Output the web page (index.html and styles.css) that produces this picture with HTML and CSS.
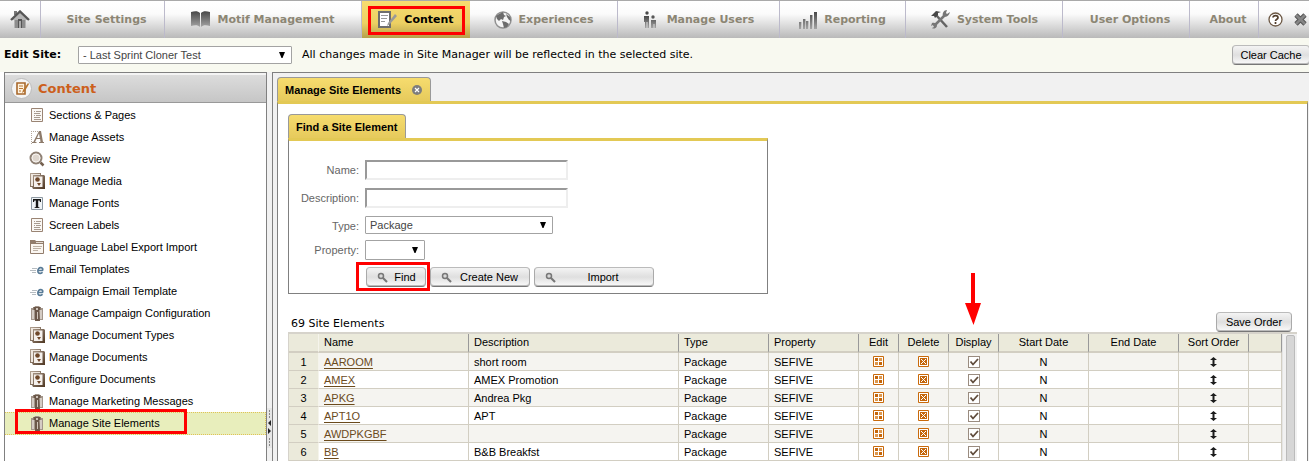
FILE: index.html
```html
<!DOCTYPE html>
<html lang="en">
<head>
<meta charset="utf-8">
<title>Manage Site Elements</title>
<link rel="stylesheet" href="styles.css">
</head>
<body>
<svg class="sprite" aria-hidden="true">
  <defs>
    <linearGradient id="steel" x1="0" y1="0" x2="0" y2="1"><stop offset="0" stop-color="#484848"/><stop offset="1" stop-color="#a4a4a4"/></linearGradient>
    <linearGradient id="bronze" x1="0" y1="0" x2="1" y2="1"><stop offset="0" stop-color="#b5a596"/><stop offset="1" stop-color="#4e3622"/></linearGradient>
  </defs>
  <symbol id="i-page" viewBox="0 0 16 16"><path d="M2.500 1.500h11v13h-11z" fill="#fbf8f4" stroke="#9a8474"/><path d="M5 4.500h1M7 4.500h5M5 6.500h6M5 8.500h1M7 8.500h5M5 10.500h6M5 12.500h7" stroke="#a89a8e"/></symbol>
  <symbol id="i-asset" viewBox="0 0 16 16"><path d="M2.500 2v13M2 2.500h8" stroke="#b4a89c" stroke-dasharray="1 1"/><path d="M10 2h2l2 11h1v1h-5v-1h1.500l-.4-3H7.500L6 13h1.500v1H3v-1h1.300zM10 4.500 8 9h2.800z" fill="#8d7b6b" fill-rule="evenodd"/></symbol>
  <symbol id="i-preview" viewBox="0 0 16 16"><circle cx="7" cy="7" r="5.500" fill="#ded6ce" stroke="#8f8175" stroke-width="2"/><circle cx="7" cy="7" r="4" fill="none" stroke="#f7f3ef"/><path d="m11.500 11.500 3 3" stroke="#75614f" stroke-width="2.500"/></symbol>
  <symbol id="i-media" viewBox="0 0 16 16"><path d="M1 0h11v2h3l1 1v13H4l-1-2H1z" fill="url(#bronze)"/><path d="M2 1h9v1H4v11H2z" fill="#efe7df"/><path d="M5 3.500h8.500V14H5z" fill="#f5f0ec"/><circle cx="8.500" cy="6.500" r="2.300" fill="#6f482a"/><path d="M8 10h4l-2 3z" fill="#6f482a"/></symbol>
  <symbol id="i-font" viewBox="0 0 16 16"><path d="M2.500 2.500h11v12h-11z" fill="#eff3f6" stroke="#8d98a1"/><path d="M4 4h8v3h-1l-.500-1.500H9.200v6.500l1.300.5v.5h-5v-.5l1.300-.5V5.500H5.500L5 7H4z" fill="#171717"/></symbol>
  <symbol id="i-label" viewBox="0 0 16 16"><path d="M1.500 2.500h13v12h-13z" fill="#faf6f1" stroke="#927d6d"/><path d="M1 1h5l1 1h8v3H1z" fill="#927d6d"/><path d="M7 3h7v1H7z" fill="#e6ddd4"/><path d="M4 7.500h9M4 9.500h8M4 11.500h5" stroke="#bdb1a5"/></symbol>
  <symbol id="i-email" viewBox="0 0 16 16"><path d="M3 7.500h5M1 9.500h6M3 11.500h4" stroke="#b6bcc1"/><path d="M9 9.500h4.500C14.500 7 11.500 5.500 9.700 7.500 7.800 10 9 12.700 11.500 12.300c1 0 1.700-.6 2-1" fill="none" stroke="#587b97" stroke-width="1.700"/></symbol>
  <symbol id="i-config" viewBox="0 0 16 16"><path d="M2 3h3l1-2h4l2 2h2v12H2z" fill="#a3968b"/><path d="M3 5h2v9H3zM11 5h2v9h-2z" fill="#d5ccc4"/><path d="M5 2h6v3h-1l1 11H6V5H5z" fill="#6b5749"/><path d="M4 2h1v3H4zM11 2h1v3h-1z" fill="#8c7b6e"/><path d="M7 3h2v2H7zM8 7h1v7H8z" fill="#cfc4ba"/></symbol>
  <symbol id="i-search" viewBox="0 0 12 12"><circle cx="4" cy="4" r="2.500" fill="#d8d8d8" stroke="#777" stroke-width="1.500"/><path d="m6 6 4 4" stroke="#777" stroke-width="2.200"/></symbol>
  <symbol id="i-edit" viewBox="0 0 11 11"><path d="M.5.5h10v10H.5z" fill="#fff" stroke="#c96a0b"/><path d="M2 2h3v3H2zM6 6h3v3H6z" fill="#c5660a"/><path d="M6 2h3v3H6zM2 6h3v3H2z" fill="#dd984f"/></symbol>
  <symbol id="i-delete" viewBox="0 0 11 11"><path d="M.5.5h10v10H.5z" fill="#fff" stroke="#c96a0b"/><path d="M2 2h7v7H2z" fill="#c5660a"/><path d="m3 3 5 5M8 3 3 8" stroke="#fff"/></symbol>
  <symbol id="i-sort" viewBox="0 0 7 10"><path d="M3.500 0 7 3H4.500v4H7L3.500 10 0 7h2.500V3H0z" fill="#1c1c1c"/></symbol>
</svg>

<nav class="nav">
  <a class="nav-item home" href="#" aria-label="Home"><svg width="20" height="20" viewBox="0 0 20 20"><path d="M4 1h3v4H4z" fill="#777"/><path d="M10 1 18 9v1h-2v8H4v-8H2V9z" fill="#b4b4b4"/><path d="m1 10 9-8.500 9 8.500" fill="none" stroke="#555" stroke-width="2.400"/><path d="M5 10h3v8H5zM12 10h3v8h-3z" fill="#8d8d8d"/><path d="M8 9h4v9H8z" fill="#555"/><path d="M9 11h2v7H9z" fill="#aaa"/></svg></a>
  <a class="nav-item plain" href="#">Site Settings</a>
  <a class="nav-item" href="#"><svg width="19" height="17" viewBox="0 0 19 17"><path d="M0 1c4-1 7-1 9 1v14c-2-2-5-2-9-1zM10 2c2-2 5-2 9-1v14c-4-1-7-1-9 1z" fill="url(#steel)"/></svg>Motif Management</a>
  <a class="nav-item active" href="#"><svg width="19" height="18" viewBox="0 0 19 18"><path d="M1 1h11v15H1z" fill="#fff" stroke="#6e6e6e" stroke-width="2"/><path d="M3 4.500h7M3 7.500h6M3 10.500h4" stroke="#999"/><path d="m17 3-7 9-1 3 3-2 7-8z" fill="#999"/></svg>Content</a>
  <a class="nav-item" href="#"><svg width="18" height="18" viewBox="0 0 18 18"><circle cx="9" cy="9" r="8" fill="#f4f4f4" stroke="#909090" stroke-width="1.500"/><path d="M5 3l4-2 1 3 2 1-2 1-1 3-2-1-2 2-2-2-1-3zM12 3l4 3 1 4-2-1-2-3zM8 10l4 1 3 2-2 3-3 1-1-4z" fill="#6c6c6c"/></svg>Experiences</a>
  <a class="nav-item people" href="#"><svg width="14" height="18" viewBox="0 0 14 18"><circle cx="4" cy="2" r="1.700" fill="#484848"/><circle cx="10" cy="6" r="1.700" fill="#585858"/><path d="M1 5h5v12H4.500v-6h-1v6H2v-6H1zM8 9h5v8h-1.500v-4h-1v4H8z" fill="url(#steel)"/></svg>Manage Users</a>
  <a class="nav-item" href="#"><svg width="18" height="18" viewBox="0 0 18 18"><path d="M0 11h3v7H0zM4 8h3v10H4zM7 10h3v8H7zM11 4h3v14h-3zM15 1h3v17h-3z" fill="url(#steel)"/><path d="M2.500 11v7M6.500 8v10M9.500 10v8M13.500 4v14" stroke="#fff" opacity=".5"/></svg>Reporting</a>
  <a class="nav-item" href="#"><svg width="20" height="19" viewBox="0 0 20 19"><path d="m6 5 11 12" stroke="#646464" stroke-width="2.500"/><path d="M1 6 6 1l5 1-3 1v2L5 8 4 6z" fill="#484848"/><path d="M4 16 15 5" stroke="#777" stroke-width="2.500"/><path d="M17 0c-3 0-5 3-4 6 3 2 6 0 7-4l-3 2-1-1zM2 13c2-1 5 0 5 3-1 3-4 3-5 2l2-1-1-2-2 1z" fill="#777"/></svg>System Tools</a>
  <a class="nav-item plain" href="#">User Options</a>
  <a class="nav-item plain" href="#">About</a>
  <div class="nav-tools">
    <button type="button" class="tool" aria-label="Help"><svg width="15" height="15" viewBox="0 0 15 15"><circle cx="7.500" cy="7.500" r="6.500" fill="#fff" stroke="#6c5844" stroke-width="1.300"/><path d="M5 5.500c.3-2.500 5-2.500 5 .2 0 1.500-2.500 1.500-2.500 3.300M7.500 10v2" fill="none" stroke="#513d2b" stroke-width="1.700"/></svg></button>
    <button type="button" class="tool" aria-label="Close"><svg width="13" height="13" viewBox="0 0 13 13"><path d="m2 2 9 9M11 2l-9 9" stroke="#555" stroke-width="4.600"/><path d="m2 2 9 9M11 2l-9 9" stroke="#858585" stroke-width="2.600"/></svg></button>
  </div>
</nav>

<div class="sitebar">
  <label class="sitebar-label" for="site">Edit Site:</label>
  <select class="select site-select" id="site"><option>- Last Sprint Cloner Test</option></select>
  <span class="sitebar-note">All changes made in Site Manager will be reflected in the selected site.</span>
  <button type="button" class="btn clear-btn">Clear Cache</button>
</div>

<div class="workspace">
  <aside class="side">
    <h2 class="side-title"><svg width="21" height="21" viewBox="0 0 21 21"><circle cx="10.500" cy="10.500" r="10" fill="#f5f5f5" stroke="#bbb"/><path d="M6 5h8v11H6z" fill="#fff3e0" stroke="#a8682c" stroke-width="1.600"/><path d="M8 8h4M8 10.500h4M8 13h2" stroke="#b87836"/><path d="m17 5-5 7-1 3 3-2 4-7z" fill="#b8752f"/></svg>Content</h2>
    <ul class="menu">
      <li><a href="#"><svg class="ico"><use href="#i-page"/></svg>Sections &amp; Pages</a></li>
      <li><a href="#"><svg class="ico"><use href="#i-asset"/></svg>Manage Assets</a></li>
      <li><a href="#"><svg class="ico"><use href="#i-preview"/></svg>Site Preview</a></li>
      <li><a href="#"><svg class="ico"><use href="#i-media"/></svg>Manage Media</a></li>
      <li><a href="#"><svg class="ico"><use href="#i-font"/></svg>Manage Fonts</a></li>
      <li><a href="#"><svg class="ico"><use href="#i-page"/></svg>Screen Labels</a></li>
      <li><a href="#"><svg class="ico"><use href="#i-label"/></svg>Language Label Export Import</a></li>
      <li><a href="#"><svg class="ico"><use href="#i-email"/></svg>Email Templates</a></li>
      <li><a href="#"><svg class="ico"><use href="#i-email"/></svg>Campaign Email Template</a></li>
      <li><a href="#"><svg class="ico"><use href="#i-config"/></svg>Manage Campaign Configuration</a></li>
      <li><a href="#"><svg class="ico"><use href="#i-media"/></svg>Manage Document Types</a></li>
      <li><a href="#"><svg class="ico"><use href="#i-media"/></svg>Manage Documents</a></li>
      <li><a href="#"><svg class="ico"><use href="#i-media"/></svg>Configure Documents</a></li>
      <li><a href="#"><svg class="ico"><use href="#i-config"/></svg>Manage Marketing Messages</a></li>
      <li class="selected"><a href="#"><svg class="ico"><use href="#i-config"/></svg>Manage Site Elements</a></li>
    </ul>
  </aside>

  <div class="splitter"><svg width="5" height="40" viewBox="0 0 5 40"><path d="M0 0h5v40H0z" fill="#e6e6e6"/><path d="M2.500 2v8M2.500 30v8" stroke="#888" stroke-dasharray="2 1"/><path d="M4 12v6L1 15zM1 20v6l3-3z" fill="#222"/></svg></div>

  <main class="main">
    <div class="tab page-tab">Manage Site Elements <button type="button" class="tab-close" aria-label="Close tab"><svg width="10" height="10" viewBox="0 0 10 10"><circle cx="5" cy="5" r="5" fill="#7d7d7d"/><path d="m3 3 4 4M7 3 3 7" stroke="#fff" stroke-width="1.200"/></svg></button></div>
    <section class="page">
      <div class="tab find-tab">Find a Site Element</div>
      <form class="find">
        <label for="name">Name:</label><input class="text" id="name" type="text">
        <label for="desc">Description:</label><input class="text" id="desc" type="text">
        <label for="type">Type:</label><select class="select type-select" id="type"><option>Package</option></select>
        <label for="prop">Property:</label><select class="select prop-select" id="prop"><option></option></select>
        <div class="actions">
          <span class="marked"><button type="button" class="btn find-btn"><svg class="mag"><use href="#i-search"/></svg><span>Find</span></button></span>
          <button type="button" class="btn create-btn"><svg class="mag"><use href="#i-search"/></svg><span>Create New</span></button>
          <button type="button" class="btn import-btn"><svg class="mag"><use href="#i-search"/></svg><span>Import</span></button>
        </div>
      </form>

      <div class="list-head"><span>69 Site Elements</span><button type="button" class="btn save-btn">Save Order</button></div>
      <div class="list">
        <table class="grid">
          <colgroup><col class="c-num"><col class="c-name"><col class="c-desc"><col class="c-wide"><col class="c-wide"><col class="c-edit"><col class="c-act"><col class="c-act"><col class="c-wide"><col class="c-wide"><col class="c-sort"><col class="c-end"></colgroup>
          <thead><tr><th></th><th>Name</th><th>Description</th><th>Type</th><th>Property</th><th class="mid">Edit</th><th class="mid">Delete</th><th class="mid">Display<svg class="pointer" width="16" height="52" viewBox="0 0 16 52"><path d="M6 0h4v30h6L8.500 52 0 30h6z" fill="#f00"/></svg></th><th class="mid">Start Date</th><th class="mid">End Date</th><th class="mid">Sort Order</th><th></th></tr></thead>
          <tbody>
            <tr><th>1</th><td><a href="#">AAROOM</a></td><td>short room</td><td>Package</td><td>SEFIVE</td><td class="mid"><svg class="act"><use href="#i-edit"/></svg></td><td class="mid"><svg class="act"><use href="#i-delete"/></svg></td><td class="mid"><input type="checkbox" aria-label="Display AAROOM" checked></td><td class="mid">N</td><td></td><td class="mid"><svg class="sort"><use href="#i-sort"/></svg></td><td></td></tr>
            <tr><th>2</th><td><a href="#">AMEX</a></td><td>AMEX Promotion</td><td>Package</td><td>SEFIVE</td><td class="mid"><svg class="act"><use href="#i-edit"/></svg></td><td class="mid"><svg class="act"><use href="#i-delete"/></svg></td><td class="mid"><input type="checkbox" aria-label="Display AMEX" checked></td><td class="mid">N</td><td></td><td class="mid"><svg class="sort"><use href="#i-sort"/></svg></td><td></td></tr>
            <tr><th>3</th><td><a href="#">APKG</a></td><td>Andrea Pkg</td><td>Package</td><td>SEFIVE</td><td class="mid"><svg class="act"><use href="#i-edit"/></svg></td><td class="mid"><svg class="act"><use href="#i-delete"/></svg></td><td class="mid"><input type="checkbox" aria-label="Display APKG" checked></td><td class="mid">N</td><td></td><td class="mid"><svg class="sort"><use href="#i-sort"/></svg></td><td></td></tr>
            <tr><th>4</th><td><a href="#">APT1O</a></td><td>APT</td><td>Package</td><td>SEFIVE</td><td class="mid"><svg class="act"><use href="#i-edit"/></svg></td><td class="mid"><svg class="act"><use href="#i-delete"/></svg></td><td class="mid"><input type="checkbox" aria-label="Display APT1O" checked></td><td class="mid">N</td><td></td><td class="mid"><svg class="sort"><use href="#i-sort"/></svg></td><td></td></tr>
            <tr><th>5</th><td><a href="#">AWDPKGBF</a></td><td></td><td>Package</td><td>SEFIVE</td><td class="mid"><svg class="act"><use href="#i-edit"/></svg></td><td class="mid"><svg class="act"><use href="#i-delete"/></svg></td><td class="mid"><input type="checkbox" aria-label="Display AWDPKGBF" checked></td><td class="mid">N</td><td></td><td class="mid"><svg class="sort"><use href="#i-sort"/></svg></td><td></td></tr>
            <tr><th>6</th><td><a href="#">BB</a></td><td>B&amp;B Breakfst</td><td>Package</td><td>SEFIVE</td><td class="mid"><svg class="act"><use href="#i-edit"/></svg></td><td class="mid"><svg class="act"><use href="#i-delete"/></svg></td><td class="mid"><input type="checkbox" aria-label="Display BB" checked></td><td class="mid">N</td><td></td><td class="mid"><svg class="sort"><use href="#i-sort"/></svg></td><td></td></tr>
          </tbody>
        </table>
        <div class="scroll"><div class="thumb"></div></div>
      </div>
    </section>
  </main>
</div>
</body>
</html>
```

FILE: styles.css
```css
* { box-sizing: border-box; }
body {
  margin: 0;
  height: 100vh;
  display: flex;
  flex-direction: column;
  overflow: hidden;
  background: #fff;
  color: #000;
  font: 11px/14px "Liberation Sans", Arial, sans-serif;
}
a { color: inherit; text-decoration: none; }
button, input, select { font: inherit; color: inherit; margin: 0; }
svg { display: block; flex: none; }
.sprite { position: absolute; width: 0; height: 0; }

/* top navigation */
.nav {
  display: grid;
  grid-template-columns: 41fr 124fr 197fr 108fr 148fr 162fr 126fr 157fr 127fr 69fr 50fr;
  height: 38px;
  flex: none;
  border-top: 1px solid #a9a9a9;
  background: linear-gradient(#fff 0%, #fbfbfb 35%, #b9b9b9 100%);
}
.nav-item {
  display: flex;
  align-items: center;
  justify-content: center;
  gap: 7px;
  border-right: 1px solid #bcbacb;
  color: #8c8674;
  font: bold 11px/14px Verdana, "DejaVu Sans", sans-serif;
  white-space: nowrap;
}
.nav-item.plain { padding-left: 8px; }
.nav-item.people { gap: 10px; }
.nav-item.active {
  position: relative;
  border-right: 0;
  background: linear-gradient(#f7dc70 0%, #ecd063 60%, #b5a04b 100%);
  color: #000;
}
.nav-item.active::after {
  content: "";
  position: absolute;
  inset: 5px 5px 3px 6px;
  border: 3px solid #f00;
}
.nav-tools { display: flex; align-items: center; justify-content: space-between; padding: 0 2px 0 9px; }
.tool, .tab-close { padding: 0; border: 0; background: none; }

/* site selection bar */
.sitebar {
  display: flex;
  align-items: center;
  flex: none;
  height: 34px;
  padding-left: 4px;
  background: #f8f9f0;
  font: 11px/14px Verdana, "DejaVu Sans", sans-serif;
}
.sitebar-label { width: 74px; font-weight: bold; }
.sitebar-note { flex: 1; padding-left: 10px; white-space: nowrap; }
.select {
  appearance: none;
  height: 18px;
  padding: 0 20px 0 4px;
  border: 1px solid #a3a3a3;
  border-radius: 1px;
  color: #444;
  font: 11px/16px "Liberation Sans", Arial, sans-serif;
  background: #fff url("data:image/svg+xml,%3Csvg xmlns='http://www.w3.org/2000/svg' width='6' height='6'%3E%3Cpath d='M0 0h6L3.500 6h-1z'/%3E%3C/svg%3E") no-repeat right 6px center;
}
.site-select { width: 214px; }
.btn {
  display: flex;
  align-items: center;
  justify-content: center;
  height: 20px;
  padding: 0 8px;
  border: 1px solid #999;
  border-color: #bbb #aaa #777;
  border-radius: 4px;
  background: linear-gradient(#f4f4f4, #dfdfdf 50%, #fafafa);
  box-shadow: inset 0 -1px #bbb;
  color: #000;
  font: 11px/14px "Liberation Sans", Arial, sans-serif;
  white-space: nowrap;
}
.clear-btn { width: 78px; margin-right: -1px; }

/* panels */
.workspace { display: flex; flex: 1; min-height: 0; padding-left: 4px; }
.side { flex: none; width: 263px; border: 1px solid #808080; border-bottom: 0; background: #fff; overflow: hidden; }
.side-title {
  display: flex;
  align-items: center;
  gap: 6px;
  height: 30px;
  margin: 0;
  padding-left: 6px;
  border-top: 2px solid #f4f4f4;
  border-bottom: 1px solid #999;
  background: linear-gradient(#dcdcdc, #c6c6c6);
  color: #cc5f1c;
  font: bold 13px/16px Verdana, "DejaVu Sans", sans-serif;
}
.menu { list-style: none; margin: 0; padding: 1px 0 0; }
.menu a { display: flex; align-items: center; gap: 4px; height: 22px; padding-left: 24px; }
.ico { width: 16px; height: 16px; }
.menu .selected { position: relative; height: 23px; background: #e8eebc; border: 1px dotted #dfc356; border-width: 1px 1px 1px 0; }
.menu .selected a { height: 20px; }
.menu .selected::after {
  content: "";
  position: absolute;
  inset: -4px 78px 0 10px;
  border: 3px solid #f00;
}
.splitter { flex: none; width: 5px; padding-top: 336px; background: #f1f1f1; }
.main {
  display: flex;
  flex-direction: column;
  flex: 1;
  min-width: 0;
  padding: 4px 1px 0 4px;
  border-top: 1px solid #808080;
  border-left: 1px solid #808080;
  background: #f1f1f1;
}
.tab {
  display: flex;
  align-items: center;
  width: fit-content;
  height: 24px;
  padding: 0 8px 0 7px;
  border: 1px solid #999;
  border-bottom: 0;
  border-radius: 4px 4px 0 0;
  background: linear-gradient(#f6dc6e, #e6ca5c);
  font: bold 11px/14px "Liberation Sans", Arial, sans-serif;
  white-space: nowrap;
}
.tab-close { margin-left: 11px; }
.page {
  flex: 1;
  min-height: 0;
  overflow: hidden;
  padding: 10px 10px 0;
  border: 1px solid #808080;
  border-top: 3px solid #e3c955;
  border-bottom: 0;
  background: #fff;
}

/* search form */
.find {
  display: grid;
  grid-template-columns: 70px 1fr;
  grid-template-rows: 28px 28px 24px 27px 26px;
  column-gap: 6px;
  align-items: start;
  width: 480px;
  padding-top: 19px;
  border: 1px solid #808080;
  border-top: 3px solid #e3c955;
  color: #666;
}
.find label { padding-top: 3px; text-align: right; }
.text { width: 203px; height: 20px; padding: 0 2px; border: 2px solid; border-color: #999 #eee #eee #999; background: #fff; }
.type-select { width: 188px; }
.prop-select { width: 60px; height: 20px; }
.actions { grid-column: 2; display: flex; gap: 4px; padding-left: 1px; }
.marked { position: relative; }
.marked::after { content: ""; position: absolute; inset: -5px -4px -4px -10px; border: 3px solid #f00; }
.actions .btn { justify-content: flex-start; gap: 2px; padding: 0 6px 0 10px; }
.actions .btn span { flex: 1; text-align: center; }
.mag { width: 12px; height: 12px; margin-top: 2px; }
.find-btn { width: 60px; }
.create-btn { width: 100px; }
.import-btn { width: 120px; }

/* results */
.list-head {
  display: flex;
  align-items: flex-end;
  justify-content: space-between;
  margin: 18px 5px 0 3px;
  font: 11px/16px Verdana, "DejaVu Sans", sans-serif;
}
.save-btn { width: 76px; }
.list { display: flex; align-items: flex-start; border-top: 2px solid #d6d3cb; border-left: 1px solid #d6d3cb; }
.grid { flex: 1; min-width: 0; table-layout: fixed; border-collapse: separate; border-spacing: 0; }
.c-num { width: 30px; }
.c-name { width: 150px; }
.c-desc { width: 210px; }
.c-wide { width: 90px; }
.c-edit { width: 40px; }
.c-act { width: 50px; }
.c-sort { width: 70px; }
.c-end { width: 33px; }
.grid th, .grid td {
  height: 18px;
  padding: 0 5px;
  border-right: 1px solid #d2cec2;
  border-bottom: 1px solid #d2cec2;
  font-weight: normal;
  line-height: 14px;
  text-align: left;
  vertical-align: middle;
  white-space: nowrap;
}
.grid thead th { position: relative; height: 19px; padding-bottom: 2px; border-right-color: #999; border-bottom-width: 2px; background: #ebeadb; }
.grid tr > :first-child { border-right-color: #f5f4ec; background: #ebeadb; text-align: center; }
.grid tbody tr:nth-child(odd) { background: #f5f4f0; }
.grid .mid { text-align: center; padding-left: 1px; padding-right: 1px; }
.grid a { color: #6b4a1c; text-decoration: underline; text-underline-offset: 2px; }
.grid svg { margin: 0 auto; }
.act { width: 11px; height: 11px; }
.sort { width: 7px; height: 10px; }
.grid .pointer { position: absolute; left: 16px; bottom: 26px; }
.grid input {
  appearance: none;
  display: block;
  width: 12px;
  height: 12px;
  margin: 1px auto 0;
  border: 1px solid #9a8c80;
  background: #fff url("data:image/svg+xml,%3Csvg xmlns='http://www.w3.org/2000/svg' width='10' height='10'%3E%3Cpath d='M1.500 4.500 4 7.500 9 2' fill='none' stroke='%23604c3c' stroke-width='1.800'/%3E%3C/svg%3E") no-repeat center;
}
.scroll { flex: none; width: 15px; padding: 1px 2px 0 3px; border-left: 1px solid #e4e4e4; background: #f1f1f1; }
.thumb { height: 200px; border: 1px solid #bbb; border-radius: 2px; background: #d6d6d6; }
```
